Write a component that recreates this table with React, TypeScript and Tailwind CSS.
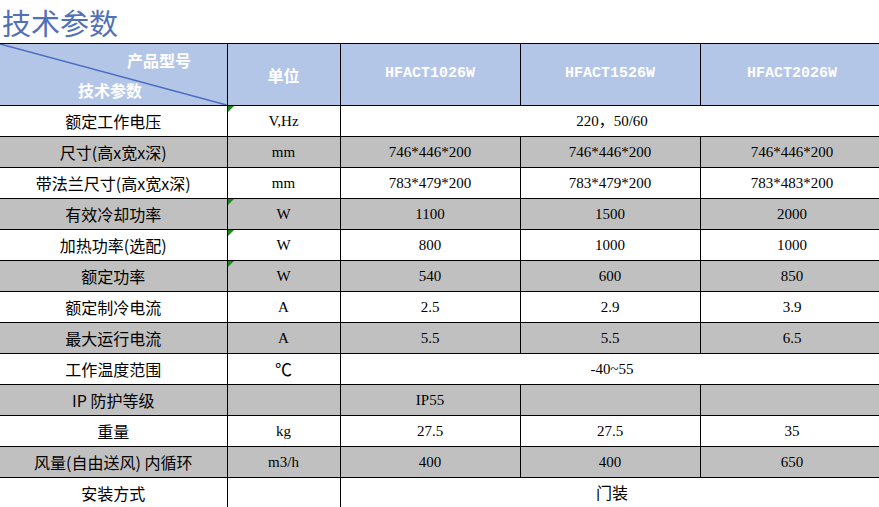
import React from 'react';

type Row = {
  name: string;
  unit: string;
  values: string[]; // one value = merged across all models
  gray: boolean;
  mark?: boolean;
};

const rows: Row[] = [
  { name: '额定工作电压', unit: 'V,Hz', values: ['220，50/60'], gray: false, mark: true },
  { name: '尺寸(高x宽x深)', unit: 'mm', values: ['746*446*200', '746*446*200', '746*446*200'], gray: true },
  { name: '带法兰尺寸(高x宽x深)', unit: 'mm', values: ['783*479*200', '783*479*200', '783*483*200'], gray: false },
  { name: '有效冷却功率', unit: 'W', values: ['1100', '1500', '2000'], gray: true, mark: true },
  { name: '加热功率(选配)', unit: 'W', values: ['800', '1000', '1000'], gray: false, mark: true },
  { name: '额定功率', unit: 'W', values: ['540', '600', '850'], gray: true, mark: true },
  { name: '额定制冷电流', unit: 'A', values: ['2.5', '2.9', '3.9'], gray: false },
  { name: '最大运行电流', unit: 'A', values: ['5.5', '5.5', '6.5'], gray: true },
  { name: '工作温度范围', unit: '℃', values: ['-40~55'], gray: false },
  { name: 'IP 防护等级', unit: '', values: ['IP55', '', ''], gray: true },
  { name: '重量', unit: 'kg', values: ['27.5', '27.5', '35'], gray: false },
  { name: '风量(自由送风) 内循环', unit: 'm3/h', values: ['400', '400', '650'], gray: true },
  { name: '安装方式', unit: '', values: ['门装'], gray: false },
];

const models = ['HFACT1026W', 'HFACT1526W', 'HFACT2026W'];

const cjk = "font-['Noto_Sans_CJK_SC',sans-serif]";
const mono = "font-['Liberation_Mono','Noto_Sans_CJK_SC',monospace]";
const serif = "font-['Liberation_Serif','Noto_Sans_CJK_SC',serif]";

function Mark() {
  return (
    <span className="absolute left-0 top-0 w-0 h-0 border-t-[6px] border-t-[#1a8a1a] border-r-[6px] border-r-transparent" />
  );
}

export default function App() {
  return (
    <div className="w-[879px] h-[507px] overflow-hidden bg-white">
      <div className={`h-[43px] pl-[2px] flex items-center text-[29px] leading-[40px] text-[#5070b8] ${cjk}`}>
        技术参数
      </div>
      <table className="w-[884px] border-collapse table-fixed text-black">
        <colgroup>
          <col className="w-[227px]" />
          <col className="w-[113px]" />
          <col className="w-[180px]" />
          <col className="w-[180px]" />
          <col className="w-[184px]" />
        </colgroup>
        <thead>
          <tr className="h-[62px] bg-[#b4c6e7] text-white font-bold">
            <th className={`relative border border-black border-l-0 p-0 ${cjk} text-[16px] font-bold`}>
              <svg className="absolute inset-0 w-full h-full" viewBox="0 0 227 62" preserveAspectRatio="none">
                <line x1="0" y1="0" x2="227" y2="62" stroke="#4a6cc0" strokeWidth="1.5" />
              </svg>
              <div className="flex flex-col items-start text-left leading-none">
                <span className="pl-[127px] pt-[1px]">产品型号</span>
                <span className="pl-[78px] pt-[14px]">技术参数</span>
              </div>
            </th>
            <th className={`border border-black p-0 ${cjk} text-[16px] font-bold`}>单位</th>
            {models.map((m) => (
              <th key={m} className={`border border-black p-0 text-[15px] font-bold ${mono}`}>
                {m}
              </th>
            ))}
          </tr>
        </thead>
        <tbody>
          {rows.map((r) => (
            <tr key={r.name} className={`h-[31px] ${r.gray ? 'bg-[#c0c0c0]' : 'bg-white'}`}>
              <td className={`border border-black border-l-0 p-0 text-center text-[16px] ${cjk}`}>{r.name}</td>
              <td className={`relative border border-black p-0 text-center text-[15px] ${serif}`}>
                {r.mark && <Mark />}
                {r.unit === '℃' ? <span className={`text-[17px] ${cjk}`}>℃</span> : r.unit}
              </td>
              {r.values.length === 1 ? (
                <td colSpan={3} className={`border border-black p-0 text-center text-[15px] ${serif}`}>
                  {r.values[0] === '门装' ? <span className={`text-[16px] ${cjk}`}>门装</span> : r.values[0]}
                </td>
              ) : (
                r.values.map((v, i) => (
                  <td key={i} className={`border border-black p-0 text-center text-[15px] ${serif}`}>
                    {v}
                  </td>
                ))
              )}
            </tr>
          ))}
        </tbody>
      </table>
    </div>
  );
}
